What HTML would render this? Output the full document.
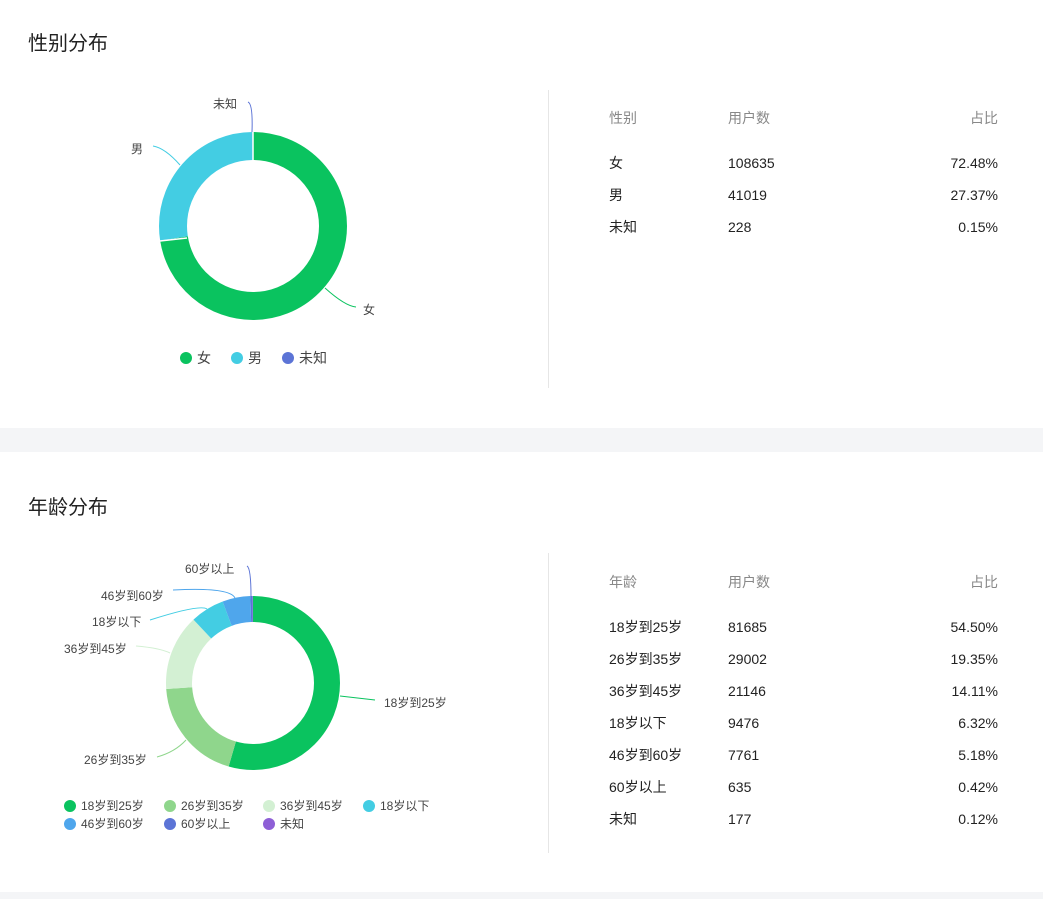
<!DOCTYPE html>
<html><head><meta charset="utf-8"><style>
body{margin:0;width:1043px;height:899px;background:#f4f5f7;font-family:"Liberation Sans","Noto Sans CJK SC",sans-serif;color:#222;position:relative;overflow:hidden}
.sec{position:absolute;left:0;width:1043px;background:#fff}
.t{position:absolute;left:28px;font-size:20px;color:#222}
.div{position:absolute;left:548px;width:1px;background:#e6e6e6}
.tx{position:absolute;font-size:14px;white-space:nowrap;line-height:16px}
.h{color:#888}
.r{text-align:right;width:100px}
svg{position:absolute;left:0;top:0}
svg text{font-family:"Liberation Sans","Noto Sans CJK SC",sans-serif;fill:#444}
</style></head><body>
<div class="sec" style="top:0;height:428px">
<div class="t" style="top:27px">性别分布</div>
<div class="div" style="top:90px;height:298px"></div>
<svg width="548" height="428">
<g transform="rotate(-90 253 226)" fill="none" stroke-width="28">
<circle cx="253" cy="226" r="80" stroke="#0ac35f" stroke-dasharray="364.3 1000"/>
<circle cx="253" cy="226" r="80" stroke="#43cde3" stroke-dasharray="137.6 1000" stroke-dashoffset="-364.3"/>
<circle cx="253" cy="226" r="80" stroke="#5c74d6" stroke-dasharray="0.9 1000" stroke-dashoffset="-501.9"/>
</g>
<line x1="253" y1="132" x2="253" y2="320" stroke="#fff" stroke-width="1.5" transform="rotate(0)" stroke-dasharray="28 1000"/>
<line x1="160" y1="241" x2="187" y2="238" stroke="#fff" stroke-width="1.5"/>
<path d="M248 102 Q253 104 252 132" fill="none" stroke="#5c74d6"/>
<path d="M153 146 Q165 148 180 165" fill="none" stroke="#43cde3"/>
<path d="M325 288 Q345 306 356 307" fill="none" stroke="#0ac35f"/>
<text x="213" y="108" font-size="12">未知</text>
<text x="131" y="153" font-size="12">男</text>
<text x="363" y="314" font-size="12">女</text>
<circle cx="186" cy="358" r="6" fill="#0ac35f"/><text x="197" y="363" font-size="14">女</text>
<circle cx="237" cy="358" r="6" fill="#43cde3"/><text x="248" y="363" font-size="14">男</text>
<circle cx="288" cy="358" r="6" fill="#5c74d6"/><text x="299" y="363" font-size="14">未知</text>
</svg>
<div class="tx h" style="left:609px;top:110px">性别</div><div class="tx h" style="left:728px;top:110px">用户数</div><div class="tx h r" style="left:898px;top:110px">占比</div>
<div class="tx" style="left:609px;top:155px">女</div><div class="tx" style="left:728px;top:155px">108635</div><div class="tx r" style="left:898px;top:155px">72.48%</div>
<div class="tx" style="left:609px;top:187px">男</div><div class="tx" style="left:728px;top:187px">41019</div><div class="tx r" style="left:898px;top:187px">27.37%</div>
<div class="tx" style="left:609px;top:219px">未知</div><div class="tx" style="left:728px;top:219px">228</div><div class="tx r" style="left:898px;top:219px">0.15%</div>
</div>
<div class="sec" style="top:452px;height:440px">
<div class="t" style="top:39px">年龄分布</div>
<div class="div" style="top:101px;height:300px"></div>
<svg width="548" height="440">
<g transform="rotate(-90 253 231)" fill="none" stroke-width="26">
<circle cx="253" cy="231" r="74" stroke="#0ac35f" stroke-dasharray="253.4 1000"/>
<circle cx="253" cy="231" r="74" stroke="#8fd68c" stroke-dasharray="90 1000" stroke-dashoffset="-253.4"/>
<circle cx="253" cy="231" r="74" stroke="#d3f0d3" stroke-dasharray="65.6 1000" stroke-dashoffset="-343.4"/>
<circle cx="253" cy="231" r="74" stroke="#43cde3" stroke-dasharray="29.4 1000" stroke-dashoffset="-409"/>
<circle cx="253" cy="231" r="74" stroke="#4fa6ec" stroke-dasharray="24.1 1000" stroke-dashoffset="-438.4"/>
<circle cx="253" cy="231" r="74" stroke="#5c74d6" stroke-dasharray="2 1000" stroke-dashoffset="-462.5"/>
<circle cx="253" cy="231" r="74" stroke="#8e5fd6" stroke-dasharray="0.6 1000" stroke-dashoffset="-464.5"/>
</g>
<path d="M247 114 Q251 116 251 145" fill="none" stroke="#5c74d6"/>
<path d="M173 138 Q230 135 235 146" fill="none" stroke="#4fa6ec"/>
<path d="M150 168 Q200 152 207 157" fill="none" stroke="#43cde3"/>
<path d="M136 194 Q160 196 170 201" fill="none" stroke="#d3f0d3"/>
<path d="M157 305 Q175 300 186 288" fill="none" stroke="#8fd68c"/>
<path d="M340 244 L375 248" fill="none" stroke="#0ac35f"/>
<text x="185" y="121" font-size="12">60岁以上</text>
<text x="101" y="148" font-size="12">46岁到60岁</text>
<text x="92" y="174" font-size="12">18岁以下</text>
<text x="64" y="201" font-size="12">36岁到45岁</text>
<text x="84" y="312" font-size="12">26岁到35岁</text>
<text x="384" y="255" font-size="12">18岁到25岁</text>
<g font-size="12">
<circle cx="70" cy="354" r="6" fill="#0ac35f"/><text x="81" y="358">18岁到25岁</text>
<circle cx="170" cy="354" r="6" fill="#8fd68c"/><text x="181" y="358">26岁到35岁</text>
<circle cx="269" cy="354" r="6" fill="#d3f0d3"/><text x="280" y="358">36岁到45岁</text>
<circle cx="369" cy="354" r="6" fill="#43cde3"/><text x="380" y="358">18岁以下</text>
<circle cx="70" cy="372" r="6" fill="#4fa6ec"/><text x="81" y="376">46岁到60岁</text>
<circle cx="170" cy="372" r="6" fill="#5c74d6"/><text x="181" y="376">60岁以上</text>
<circle cx="269" cy="372" r="6" fill="#8e5fd6"/><text x="280" y="376">未知</text>
</g>
</svg>
<div class="tx h" style="left:609px;top:122px">年龄</div><div class="tx h" style="left:728px;top:122px">用户数</div><div class="tx h r" style="left:898px;top:122px">占比</div>
<div class="tx" style="left:609px;top:167px">18岁到25岁</div><div class="tx" style="left:728px;top:167px">81685</div><div class="tx r" style="left:898px;top:167px">54.50%</div>
<div class="tx" style="left:609px;top:199px">26岁到35岁</div><div class="tx" style="left:728px;top:199px">29002</div><div class="tx r" style="left:898px;top:199px">19.35%</div>
<div class="tx" style="left:609px;top:231px">36岁到45岁</div><div class="tx" style="left:728px;top:231px">21146</div><div class="tx r" style="left:898px;top:231px">14.11%</div>
<div class="tx" style="left:609px;top:263px">18岁以下</div><div class="tx" style="left:728px;top:263px">9476</div><div class="tx r" style="left:898px;top:263px">6.32%</div>
<div class="tx" style="left:609px;top:295px">46岁到60岁</div><div class="tx" style="left:728px;top:295px">7761</div><div class="tx r" style="left:898px;top:295px">5.18%</div>
<div class="tx" style="left:609px;top:327px">60岁以上</div><div class="tx" style="left:728px;top:327px">635</div><div class="tx r" style="left:898px;top:327px">0.42%</div>
<div class="tx" style="left:609px;top:359px">未知</div><div class="tx" style="left:728px;top:359px">177</div><div class="tx r" style="left:898px;top:359px">0.12%</div>
</div>
</body></html>
